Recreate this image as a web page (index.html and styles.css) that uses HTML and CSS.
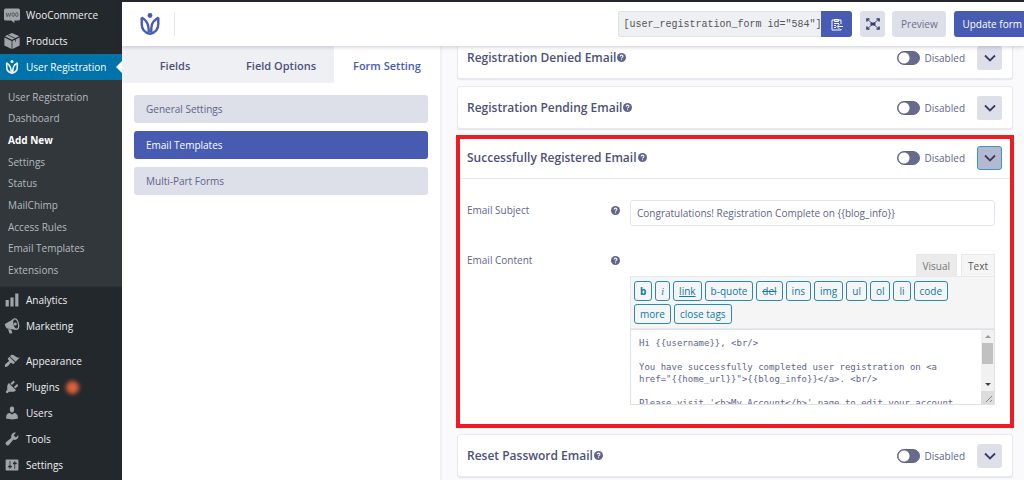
FILE: index.html
```html
<!DOCTYPE html>
<html lang="en">
<head>
    <meta charset="UTF-8">
    <meta name="viewport" content="width=device-width, initial-scale=1.0">
    <title>User Registration</title>
    <link rel="stylesheet" href="styles.css">
</head>
<body>
<svg class="sprite" aria-hidden="true">
    <symbol id="logo" viewBox="0 0 20 22">
        <circle cx="10" cy="2.500" r="2.400" fill="currentColor"/>
        <g fill="none" stroke="currentColor" stroke-width="2.400">
            <path d="M1.700 4.500V11c0 5 2.500 8.500 8.300 9.800 5.800-1.300 8.300-4.800 8.300-9.800V4.500"/>
            <path d="M1.500 4.500C6 7 8.800 10 8.800 19.500M14.500 7.500C12 10 11.200 12 11.200 19.500M18.500 4.500L14 8"/>
        </g>
    </symbol>
    <symbol id="help" viewBox="0 0 12 12">
        <circle cx="6" cy="6" r="6"/>
        <path d="M4.200 4.600C4.200 2.300 7.900 2.300 7.900 4.500 7.900 5.800 6.100 5.800 6.100 7.200M6.100 8.300v1.400" fill="none" stroke="#fff" stroke-width="1.400"/>
    </symbol>
    <symbol id="chevron" viewBox="0 0 12 8">
        <path d="M1 1.500l5 5 5-5" fill="none" stroke="currentColor" stroke-width="1.800"/>
    </symbol>
</svg>

<nav class="sidebar">
    <a class="menu-item" href="#">
        <svg class="menu-icon" viewBox="0 0 20 20"><path d="M2 2h16q2 0 2 2v11q0 2-2 2h-5v3l-4-3H2q-2 0-2-2V4q0-2 2-2z"/><path d="M2.500 7l1.500 5 1.500-4L7 12l1.500-5" fill="none" stroke="#555b60" stroke-width="1.200"/><g fill="none" stroke="#555b60" stroke-width="1.200"><ellipse cx="11.500" cy="9.500" rx="1.500" ry="2.500"/><ellipse cx="16" cy="9.500" rx="1.500" ry="2.500"/></g></svg>
        WooCommerce
    </a>
    <a class="menu-item" href="#">
        <svg class="menu-icon" viewBox="0 0 20 20"><path d="M10 0l9 4-9 4.500L1 4zM.5 5.500L9.500 10v10l-9-4.500zM19.500 5.500L10.500 10v10l9-4.500z"/><path d="M5 2.500l9.500 4.500v4" fill="none" stroke="#23282d"/></svg>
        Products
    </a>
    <a class="menu-item current" href="#">
        <svg class="menu-icon"><use href="#logo"/></svg>
        User Registration
    </a>
    <div class="submenu">
        <a href="#">User Registration</a>
        <a href="#">Dashboard</a>
        <a href="#" class="active">Add New</a>
        <a href="#">Settings</a>
        <a href="#">Status</a>
        <a href="#">MailChimp</a>
        <a href="#">Access Rules</a>
        <a href="#">Email Templates</a>
        <a href="#">Extensions</a>
    </div>
    <a class="menu-item" href="#">
        <svg class="menu-icon" viewBox="0 0 20 20"><path d="M18 18V2h-4v16h4zm-6 0V7H8v11h4zm-6 0v-8H2v8h4z"/></svg>
        Analytics
    </a>
    <a class="menu-item" href="#">
        <svg class="menu-icon" viewBox="0 0 20 20"><path d="M1 7.500L11 2q2 0 4 5t1 8l-10-1.500Q2 14 1 7.500zM5 14l4 .5 1.500 4.500-3.500.5z"/><ellipse cx="14.500" cy="7.500" rx="3.500" ry="6.500" fill="#23282d" stroke="#a0a5aa" stroke-width="1.600" transform="rotate(-15 14.500 7.500)"/><circle cx="14" cy="7.500" r="2"/></svg>
        Marketing
    </a>
    <a class="menu-item group-start" href="#">
        <svg class="menu-icon" viewBox="0 0 20 20"><path d="M14.480 11.060L7.410 3.990l1.500-1.500c.5-.56 2.300-.47 3.510.32 1.210.8 1.430 1.280 2.910 2.100 1.180.64 2.450 1.260 4.450.85zm-.71.71L6.700 4.700 4.930 6.470c-.39.39-.39 1.020 0 1.410l1.060 1.060c.39.39.39 1.030 0 1.420-.6.6-1.430 1.110-2.210 1.690-.35.26-.7.53-1.010.84C1.430 14.230.4 16.080 1.400 17.070c.99 1 2.840-.03 4.180-1.360.31-.31.58-.66.85-1.020.57-.78 1.080-1.610 1.690-2.210.39-.39 1.020-.39 1.410 0l1.060 1.060c.39.39 1.020.39 1.410 0z"/></svg>
        Appearance
    </a>
    <a class="menu-item" href="#">
        <svg class="menu-icon" viewBox="0 0 20 20"><path d="M13.110 4.360L9.870 7.600 8 5.730l3.240-3.240c.35-.34 1.050-.2 1.560.32.52.51.66 1.210.31 1.550zm-8 1.770l.91-1.120 9.010 9.010-1.190.84c-.71.71-2.630 1.160-3.820 1.160H6.140L4.900 17.260c-.59.59-1.540.59-2.120 0-.59-.58-.59-1.530 0-2.120l1.240-1.240v-3.880c0-1.130.4-3.190 1.090-3.890zm7.260 3.970l3.240-3.240c.34-.35 1.040-.21 1.550.31.52.51.66 1.210.31 1.550l-3.240 3.250z"/></svg>
        Plugins <span class="update-dot"></span>
    </a>
    <a class="menu-item" href="#">
        <svg class="menu-icon" viewBox="0 0 20 20"><path d="M10 9.250c-2.270 0-2.730-3.440-2.730-3.440C7 4.020 7.820 2 9.970 2c2.160 0 2.980 2.020 2.710 3.810 0 0-.41 3.440-2.680 3.440zm0 2.570L12.720 10c2.390 0 4.520 2.330 4.520 4.530v2.490s-3.650 1.130-7.240 1.130c-3.650 0-7.240-1.130-7.240-1.130v-2.490c0-2.250 1.940-4.480 4.470-4.480z"/></svg>
        Users
    </a>
    <a class="menu-item" href="#">
        <svg class="menu-icon" viewBox="0 0 20 20"><path d="M16.680 9.770c-1.340 1.340-3.300 1.670-4.950.99l-5.410 6.520c-.99.99-2.590.99-3.580 0s-.99-2.590 0-3.570l6.520-5.420c-.68-1.650-.35-3.610.99-4.950 1.280-1.280 3.120-1.620 4.720-1.060l-2.890 2.890 2.820 2.820 2.860-2.870c.53 1.580.18 3.390-1.080 4.650z"/></svg>
        Tools
    </a>
    <a class="menu-item" href="#">
        <svg class="menu-icon" viewBox="0 0 20 20"><path fill-rule="evenodd" d="M18 16V4c0-.55-.45-1-1-1H3c-.55 0-1 .45-1 1v12c0 .55.45 1 1 1h14c.55 0 1-.45 1-1zM8 11h1c.55 0 1 .45 1 1s-.45 1-1 1H8v1.500c0 .28-.22.5-.5.5s-.5-.22-.5-.5V13H6c-.55 0-1-.45-1-1s.45-1 1-1h1V5.500c0-.28.22-.5.5-.5s.5.22.5.5V11zm5-2h-1c-.55 0-1-.45-1-1s.45-1 1-1h1V5.500c0-.28.22-.5.5-.5s.5.22.5.5V7h1c.55 0 1 .45 1 1s-.45 1-1 1h-1v5.500c0 .28-.22.5-.5.5s-.5-.22-.5-.5V9z"/></svg>
        Settings
    </a>
</nav>

<div class="page">
    <header class="topbar">
        <svg class="brand"><use href="#logo"/></svg>
        <div class="topbar-actions">
            <div class="shortcode">
                <input type="text" aria-label="Form shortcode" value='[user_registration_form id="584"]' readonly>
                <button class="primary" aria-label="Copy shortcode">
                    <svg width="12" height="13" viewBox="0 0 12 13" fill="none" stroke="#fff"><path d="M10 6V2H1v10h9v-1M3.500 3.500V1.500h4v2zM3 5.500h5M3 7.500h2M3 9.500h2M12 8.500H6.500M8.500 6l-2.500 2.500L8.500 11"/></svg>
                </button>
            </div>
            <button class="secondary fullscreen" aria-label="Full screen">
                <svg width="14" height="12" viewBox="0 0 14 12"><path d="M1 3.500V1h2.500M10.500 1H13v2.500M13 8.500V11h-2.500M3.500 11H1V8.500" fill="none" stroke="currentColor" stroke-width="1.600"/><path d="M1.500 1.500l11 9M12.500 1.500l-11 9" stroke="currentColor" stroke-width=".8"/><path d="M4.500 4.500h5v3h-5z" fill="currentColor"/></svg>
            </button>
            <button class="secondary preview">Preview</button>
            <button class="primary update">Update form</button>
        </div>
    </header>

    <div class="builder">
        <aside class="panel">
            <div class="tabs">
                <button class="tab">Fields</button>
                <button class="tab">Field Options</button>
                <button class="tab active">Form Setting</button>
            </div>
            <div class="sections">
                <button class="section">General Settings</button>
                <button class="section active">Email Templates</button>
                <button class="section">Multi-Part Forms</button>
            </div>
        </aside>

        <main class="cards">
            <section class="card">
                <div class="card-head">
                    <h2>Registration Denied Email</h2>
                    <svg class="help"><use href="#help"/></svg>
                    <label class="switch"><input type="checkbox"> Disabled</label>
                    <button class="expand" aria-label="Expand"><svg><use href="#chevron"/></svg></button>
                </div>
            </section>
            <section class="card">
                <div class="card-head">
                    <h2>Registration Pending Email</h2>
                    <svg class="help"><use href="#help"/></svg>
                    <label class="switch"><input type="checkbox"> Disabled</label>
                    <button class="expand" aria-label="Expand"><svg><use href="#chevron"/></svg></button>
                </div>
            </section>
            <section class="card highlighted">
                <div class="card-head">
                    <h2>Successfully Registered Email</h2>
                    <svg class="help"><use href="#help"/></svg>
                    <label class="switch"><input type="checkbox"> Disabled</label>
                    <button class="expand open" aria-label="Collapse"><svg><use href="#chevron"/></svg></button>
                </div>
                <div class="card-body">
                    <div class="field-label">
                        <label for="subject">Email Subject</label>
                        <svg class="help"><use href="#help"/></svg>
                    </div>
                    <input class="subject" type="text" id="subject" value="Congratulations! Registration Complete on {{blog_info}}">
                    <div class="field-label">
                        <label for="content">Email Content</label>
                        <svg class="help"><use href="#help"/></svg>
                    </div>
                    <div class="editor">
                        <div class="editor-tabs">
                            <button>Visual</button>
                            <button class="active">Text</button>
                        </div>
                        <div class="quicktags">
                            <button><b>b</b></button>
                            <button><i>i</i></button>
                            <button><u>link</u></button>
                            <button>b-quote</button>
                            <button><del>del</del></button>
                            <button>ins</button>
                            <button>img</button>
                            <button>ul</button>
                            <button>ol</button>
                            <button>li</button>
                            <button>code</button>
                            <button>more</button>
                            <button>close tags</button>
                        </div>
                        <div class="editor-area">
                            <textarea id="content">Hi {{username}}, &lt;br/&gt;

You have successfully completed user registration on &lt;a href="{{home_url}}"&gt;{{blog_info}}&lt;/a&gt;. &lt;br/&gt;

Please visit '&lt;b&gt;My Account&lt;/b&gt;' page to edit your account details and create your user profile on &lt;a href="{{home_url}}"&gt;{{blog_info}}&lt;/a&gt;. &lt;br/&gt;

Thank You!</textarea>
                            <div class="scrollbar" aria-hidden="true">
                                <svg viewBox="0 0 13 13"><path d="M4 8l3-3 3 3z" fill="#999"/></svg>
                                <div class="track"><div class="thumb"></div></div>
                                <svg viewBox="0 0 13 13"><path d="M4 5l3 3 3-3z" fill="#444"/></svg>
                                <svg class="grip" viewBox="0 0 13 13"><path d="M5 11l6-6M9 11l2-2" stroke="#888"/></svg>
                            </div>
                        </div>
                    </div>
                </div>
            </section>
            <section class="card">
                <div class="card-head">
                    <h2>Reset Password Email</h2>
                    <svg class="help"><use href="#help"/></svg>
                    <label class="switch"><input type="checkbox"> Disabled</label>
                    <button class="expand" aria-label="Expand"><svg><use href="#chevron"/></svg></button>
                </div>
            </section>
        </main>
    </div>
</div>
</body>
</html>
```
FILE: styles.css
```css
* {
    box-sizing: border-box;
}

body {
    margin: 0;
    padding-top: 2px;
    display: flex;
    height: 100vh;
    overflow: hidden;
    font-family: "Open Sans", sans-serif;
    font-size: 10px;
    font-weight: 500;
    color: #60648a;
    background-color: #23282d;
}

button,
input {
    font-family: inherit;
    font-size: inherit;
    font-weight: inherit;
    color: inherit;
}

button {
    padding: 0;
    border: none;
    border-radius: 3px;
    white-space: nowrap;
    cursor: pointer;
}

.sprite {
    display: none;
}

/* sidebar */
.sidebar {
    flex: none;
    width: 122px;
    background-color: #23282d;
}

.sidebar a {
    color: #eee;
    text-decoration: none;
    white-space: nowrap;
}

.sidebar .menu-item {
    display: flex;
    align-items: center;
    height: 26px;
    padding-left: 4px;
    position: relative;
}

.menu-icon {
    width: 16px;
    height: 16px;
    margin-right: 6px;
    fill: #a0a5aa;
}

.menu-item.current {
    background-color: #0073aa;
    color: #fff;
}

.current .menu-icon {
    height: 14px;
}

.menu-item.current::after {
    content: '';
    position: absolute;
    right: 0;
    top: 7px;
    border: 6px solid transparent;
    border-right-color: #fff;
    border-left: none;
}

.sidebar .group-start {
    margin-top: 9px;
}

.submenu {
    display: grid;
    grid-auto-rows: 1fr;
    align-items: center;
    min-height: 207px;
    padding: 6px 8px 5px;
    border-bottom: 1px solid #2b3035;
    background-color: #32373c;
    font-weight: 400;
}

.sidebar .submenu a {
    color: #b4b9be;
}

.sidebar .submenu .active {
    color: #fff;
    font-weight: 700;
}

.update-dot {
    width: 13px;
    height: 13px;
    margin-left: 6px;
    border-radius: 50%;
    background-color: #dd6238;
    filter: blur(2px);
}

/* top bar */
.page {
    flex: 1;
    min-width: 0;
    display: flex;
    flex-direction: column;
    background-color: #fff;
}

.topbar {
    display: flex;
    align-items: center;
    height: 44px;
    position: relative;
    z-index: 1;
    background-color: #fff;
    box-shadow: 0 1px 4px rgba(50, 50, 90, 0.25);
}

.brand {
    width: 53px;
    height: 24px;
    padding: 0 14px 0 18px;
    border-right: 1px solid #e6e7ee;
    color: #475bb2;
}

.topbar-actions {
    display: flex;
    margin-left: auto;
}

.topbar-actions button {
    height: 26px;
}

.shortcode {
    display: flex;
    margin-right: 8px;
}

.shortcode input {
    width: 203px;
    height: 26px;
    padding: 0 0 0 4px;
    border: 1px solid #e1e2e8;
    border-right: none;
    border-radius: 3px 0 0 3px;
    background-color: #eff0f4;
    color: #555;
    font-family: "Liberation Mono", monospace;
}

.shortcode button {
    width: 31px;
    border-radius: 0 3px 3px 0;
}

.primary {
    background-color: #475bb2;
    color: #fff;
}

.secondary {
    background-color: #dddfe9;
    color: #6b6f8c;
}

button svg {
    display: block;
    margin: auto;
}

.fullscreen {
    width: 25px;
    margin-right: 7px;
    color: #383d61;
}

.preview {
    width: 54px;
    margin-right: 8px;
}

.topbar-actions .update {
    padding: 0 2px 0 8px;
    border-radius: 3px 0 0 3px;
}

/* left panel */
.builder {
    flex: 1;
    min-height: 0;
    display: flex;
}

.panel {
    flex: none;
    width: 320px;
    border-right: 2px solid #f0f0f5;
}

.tabs {
    display: flex;
}

.tab {
    flex: 1;
    height: 37px;
    padding-top: 2px;
    border-radius: 0;
    background-color: #eff0f4;
    color: #4c5177;
    font-size: 11px;
    font-weight: 600;
}

.tab.active {
    background-color: #fff;
    color: #475bb2;
}

.sections {
    display: flex;
    flex-direction: column;
    gap: 8px;
    padding: 12px;
}

.section {
    height: 28px;
    padding-left: 12px;
    background-color: #dddfe9;
    color: #60648a;
    text-align: left;
}

.section.active {
    background-color: #475bb2;
    color: #fff;
}

/* email cards */
.cards {
    flex: 1;
    min-width: 0;
    display: flex;
    flex-direction: column;
    gap: 7px;
    margin-top: -10px;
    padding: 0 11px 0 15px;
    background-color: #fafafc;
}

.card {
    border: 1px solid #e8e9f0;
    border-radius: 3px;
    background-color: #fff;
    box-shadow: 0 1px 1px #e4e5ee;
}

.card.highlighted {
    outline: 4px solid #ed1c24;
    outline-offset: -3px;
    border-radius: 0;
}

.card-head {
    display: flex;
    align-items: center;
    height: 41px;
    padding: 0 10px 0 9px;
}

.card-head h2 {
    margin: 0 1px 0 0;
    color: #4c5177;
    font-size: 12px;
    font-weight: 600;
    white-space: nowrap;
}

.help {
    flex: none;
    width: 9px;
    height: 9px;
    fill: #60648a;
}

.switch {
    display: flex;
    align-items: center;
    gap: 5px;
    margin-left: auto;
}

.switch input {
    appearance: none;
    width: 23px;
    height: 14px;
    margin: 0;
    border: 1px solid #60648a;
    border-radius: 7px;
    background: radial-gradient(circle at 6px 6px, #fff 5px, #666a8c 6px);
}

.expand {
    width: 25px;
    height: 24px;
    margin-left: 12px;
    background-color: #dddfe9;
    color: #383d61;
}

.expand svg {
    width: 12px;
    height: 8px;
}

.expand.open {
    border: 1px solid #3a94c4;
    background-color: #b5b9d0;
}

.card-body {
    display: grid;
    grid-template-columns: 163px 1fr;
    row-gap: 24px;
    padding: 21px 17px 21px 9px;
    border-top: 1px solid #e8e9f0;
}

.field-label {
    display: flex;
    align-items: center;
    justify-content: space-between;
    align-self: start;
    height: 20px;
    padding-right: 10px;
}

.subject {
    width: 100%;
    height: 26px;
    padding: 0 6px;
    border: 1px solid #e4e5ee;
    border-radius: 3px;
    font-weight: 400;
}

.editor {
    padding-top: 4px;
}

.editor-tabs {
    display: flex;
    justify-content: flex-end;
    gap: 4px;
}

.editor-tabs button {
    height: 22px;
    padding: 0 6px;
    border: 1px solid #e8e8ec;
    border-bottom: none;
    border-radius: 0;
    background-color: #ebebeb;
    color: #777;
}

.editor-tabs .active {
    background-color: #f5f5f5;
    color: #555;
}

.quicktags {
    display: flex;
    flex-wrap: wrap;
    gap: 3px;
    padding: 4px 20px 4px 3px;
    border: 1px solid #e8e8ec;
    background-color: #f5f5f5;
}

.quicktags button {
    height: 20px;
    padding: 0 5px;
    border: 1px solid #2b8ab0;
    background-color: #f5f5f5;
    color: #0e7aa5;
}

.quicktags i {
    font-family: "Liberation Serif", serif;
}

.editor-area {
    display: flex;
    height: 76px;
    border: 1px solid #dfe0e8;
}

textarea {
    flex: 1;
    min-width: 0;
    padding: 7px 16px 0 8px;
    border: none;
    overflow: hidden;
    resize: none;
    color: #60648a;
    font-family: "DejaVu Sans Mono", monospace;
    font-size: 9px;
    line-height: 12px;
}

.scrollbar {
    display: flex;
    flex-direction: column;
    width: 13px;
    background-color: #f1f1f1;
}

.scrollbar svg {
    flex: none;
    width: 13px;
    height: 13px;
}

.track {
    flex: 1;
}

.thumb {
    height: 21px;
    margin: 0 1px;
    background-color: #c1c1c1;
}

.grip {
    background-color: #dcdcdc;
}
```
